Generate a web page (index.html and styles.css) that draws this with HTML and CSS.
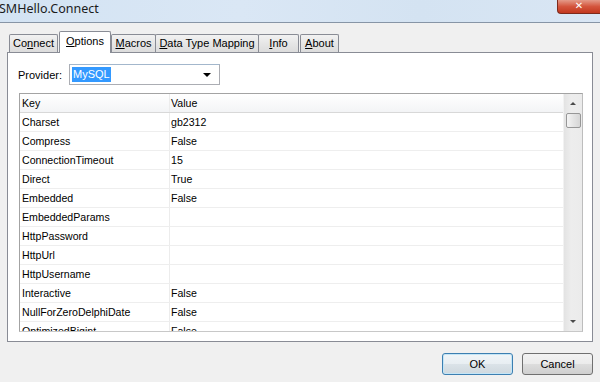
FILE: index.html
```html
<!DOCTYPE html>
<html lang="en">
<head>
    <meta charset="UTF-8">
    <title>SMHello.Connect</title>
    <link rel="stylesheet" href="styles.css">
</head>
<body>
    <div class="window">
        <div class="titlebar">
            <div class="title">SMHello.Connect</div>
            <div class="close-btn">&#10005;</div>
        </div>

        <div class="tabs">
            <div class="tab tab-connect">Co<u>n</u>nect</div>
            <div class="tab tab-options active"><u>O</u>ptions</div>
            <div class="tab tab-macros"><u>M</u>acros</div>
            <div class="tab tab-mapping"><u>D</u>ata Type Mapping</div>
            <div class="tab tab-info"><u>I</u>nfo</div>
            <div class="tab tab-about"><u>A</u>bout</div>
        </div>

        <div class="panel">
            <div class="provider-row">
                <label class="provider-label">Provider:</label>
                <div class="combo">
                    <span class="combo-text">MySQL</span>
                    <span class="combo-arrow"></span>
                </div>
            </div>

            <div class="grid">
                <div class="grid-body">
                    <div class="row header">
                        <div class="cell key">Key</div>
                        <div class="cell value">Value</div>
                    </div>
                    <div class="row"><div class="cell key">Charset</div><div class="cell value">gb2312</div></div>
                    <div class="row"><div class="cell key">Compress</div><div class="cell value">False</div></div>
                    <div class="row"><div class="cell key">ConnectionTimeout</div><div class="cell value">15</div></div>
                    <div class="row"><div class="cell key">Direct</div><div class="cell value">True</div></div>
                    <div class="row"><div class="cell key">Embedded</div><div class="cell value">False</div></div>
                    <div class="row"><div class="cell key">EmbeddedParams</div><div class="cell value"></div></div>
                    <div class="row"><div class="cell key">HttpPassword</div><div class="cell value"></div></div>
                    <div class="row"><div class="cell key">HttpUrl</div><div class="cell value"></div></div>
                    <div class="row"><div class="cell key">HttpUsername</div><div class="cell value"></div></div>
                    <div class="row"><div class="cell key">Interactive</div><div class="cell value">False</div></div>
                    <div class="row"><div class="cell key">NullForZeroDelphiDate</div><div class="cell value">False</div></div>
                    <div class="row"><div class="cell key">OptimizedBigint</div><div class="cell value">False</div></div>
                </div>
                <div class="scrollbar">
                    <div class="arrow up"></div>
                    <div class="thumb"></div>
                    <div class="track"></div>
                    <div class="arrow down"></div>
                </div>
            </div>
        </div>

        <div class="footer">
            <button class="btn default">OK</button>
            <button class="btn">Cancel</button>
        </div>
    </div>
</body>
</html>
```

FILE: styles.css
```css
* { box-sizing: border-box; margin: 0; padding: 0; }
body {
    font-family: 'Liberation Sans', Arial, sans-serif;
    font-size: 11px;
    color: #000000;
    background-color: #f0f0f0;
    width: 600px;
    height: 382px;
    overflow: hidden;
}
.window { display: flex; flex-direction: column; height: 382px; }

/* Title bar */
.titlebar {
    height: 23px;
    flex: none;
    display: flex;
    justify-content: space-between;
    align-items: flex-start;
    background: linear-gradient(to right, #d3e3f3, #dae7f5 40%, #d4e3f2 70%, #d9e6f4);
    border-bottom: 1px solid #8795a6;
}
.title {
    font-family: 'Noto Sans', sans-serif;
    font-size: 12.5px;
    line-height: 17px;
    color: #1b1b1b;
    margin-left: -1px;
}
.close-btn {
    width: 43px;
    height: 14px;
    background: linear-gradient(to bottom, #e49a88, #d4553d 50%, #c2381f);
    border: 1px solid #7d2a1c;
    border-top: none;
    border-right: none;
    border-bottom-left-radius: 4px;
    color: #ffffff;
    font-size: 10px;
    font-weight: bold;
    text-align: center;
    line-height: 12px;
    font-family: 'DejaVu Sans', sans-serif;
}

/* Tabs */
.tabs {
    display: flex;
    align-items: flex-end;
    margin: 8px 0 0 9px;
    height: 21px;
    position: relative;
    z-index: 1;
}
.tab {
    height: 18px;
    line-height: 17px;
    text-align: center;
    border: 1px solid #898c95;
    border-bottom: none;
    margin-right: -1px;
    background: linear-gradient(to bottom, #f2f2f2, #e6e6e6 50%, #dcdcdc);
    border-radius: 2px 2px 0 0;
    color: #000000;
}
.tab-connect { width: 49px; }
.tab-options { width: 52px; }
.tab-macros { width: 45px; }
.tab-mapping { width: 104px; }
.tab-info { width: 41px; margin-right: 1px; }
.tab-about { width: 39px; }
.tab.active {
    height: 22px;
    margin: 0 0 -1px 2px;
    line-height: 19px;
    background: #ffffff;
    position: relative;
    z-index: 2;
}

/* Panel */
.panel {
    margin: 0 7px;
    height: 290px;
    flex: none;
    background: #ffffff;
    border: 1px solid #898c95;
    padding: 11px 9px 0 11px;
    display: flex;
    flex-direction: column;
}
.provider-row { display: flex; align-items: center; height: 21px; }
.provider-label { width: 51px; margin-left: -1px; }
.combo {
    width: 151px;
    height: 21px;
    border: 1px solid #abadb3;
    border-top-color: #a3b7cc;
    display: flex;
    align-items: center;
    justify-content: space-between;
    padding: 0 8px 0 2px;
    background: #ffffff;
}
.combo-text {
    background: #3399ff;
    color: #ffffff;
    padding: 0 1px;
    line-height: 15px;
}
.combo-arrow {
    width: 0; height: 0;
    border-left: 4px solid transparent;
    border-right: 4px solid transparent;
    border-top: 4px solid #000000;
}

/* Grid */
.grid {
    margin-top: 8px;
    height: 239px;
    border: 1px solid #a0a0a0;
    border-color: #a3a3a3 #bdbdbd #c8c8c8 #a3a3a3;
    display: flex;
    overflow: hidden;
}
.grid-body { flex: 1; overflow: hidden; }
.row {
    display: flex;
    height: 19px;
    border-bottom: 1px solid #eeeeee;
}
.row.header {
    background: linear-gradient(to bottom, #ffffff, #f3f4f6);
    border-bottom: 1px solid #d8d8d8;
}
.cell {
    font-size: 10.6px;
    line-height: 18px;
    padding-left: 2px;
    white-space: nowrap;
    overflow: hidden;
}
.cell.key { width: 150px; border-right: 1px solid #ececec; }
.cell.value { flex: 1; padding-left: 1px; }

.scrollbar {
    width: 19px;
    flex: none;
    background: linear-gradient(to right, #e3e3e3, #ededed 40%, #ebebeb);
    border-left: 1px solid #f2f2f2;
    display: flex;
    flex-direction: column;
    align-items: center;
}
.arrow {
    height: 19px;
    width: 17px;
    display: flex;
    align-items: center;
    justify-content: center;
}
.arrow::after {
    content: '';
    width: 0; height: 0;
    border-left: 3px solid transparent;
    border-right: 3px solid transparent;
}
.arrow.up::after { border-bottom: 3px solid #4a4a4a; }
.arrow.down::after { border-top: 3px solid #4a4a4a; }
.thumb {
    width: 15px;
    height: 15px;
    border: 1px solid #979797;
    border-radius: 2px;
    background: linear-gradient(to right, #f4f4f4, #e4e4e4 50%, #d6d6d6);
}
.track { flex: 1; }

/* Footer */
.footer {
    display: flex;
    justify-content: flex-end;
    gap: 9px;
    padding: 11px 7px 0 0;
}
.btn {
    width: 71px;
    height: 22px;
    font-family: 'Liberation Sans', Arial, sans-serif;
    font-size: 11px;
    color: #000000;
    border: 1px solid #707070;
    border-radius: 3px;
    background: linear-gradient(to bottom, #f2f2f2, #ebebeb 50%, #dddddd 51%, #cfcfcf);
}
.btn.default {
    border-color: #3c7fb1;
    box-shadow: inset 0 0 0 1px #c4e5f6;
    background: linear-gradient(to bottom, #f0f5f8, #e8eef2 50%, #dbe3e8 51%, #cfd8de);
}
```
